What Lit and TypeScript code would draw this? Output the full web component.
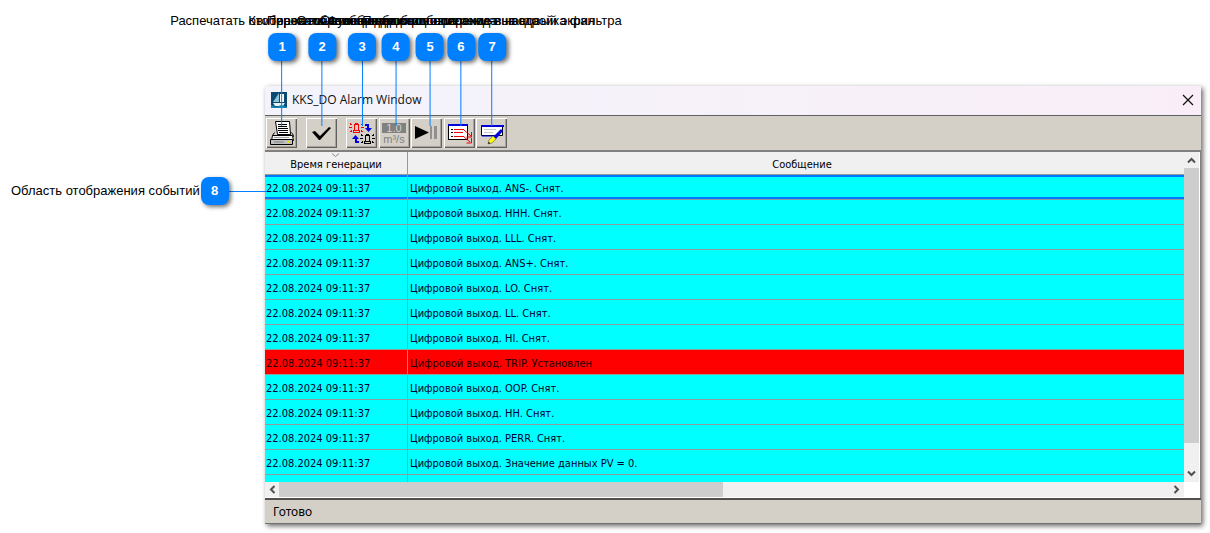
import { LitElement, html, css, svg, nothing } from "lit";
import { customElement, state } from "lit/decorators.js";
import { classMap } from "lit/directives/class-map.js";
import { styleMap } from "lit/directives/style-map.js";

interface AlarmEvent {
  time: string;
  text: string;
  active?: boolean;
}

const TIME = "22.08.2024 09:11:37";
const EVENTS: AlarmEvent[] = [
  "ANS-. Снят.",
  "HHH. Снят.",
  "LLL. Снят.",
  "ANS+. Снят.",
  "LO. Снят.",
  "LL. Снят.",
  "HI. Снят.",
  "TRIP. Установлен",
  "OOP. Снят.",
  "HH. Снят.",
  "PERR. Снят.",
  "Значение данных PV = 0.",
].map((s) => ({ time: TIME, text: `Цифровой выход. ${s}`, active: s.startsWith("TRIP") }));

const CALLOUTS = [
  { n: 1, x: 282, label: "Распечатать отображаемые события" },
  { n: 2, x: 322, label: "Квитировать сообщения" },
  { n: 3, x: 362, label: "Переключение вида просмотра" },
  { n: 4, x: 396, label: "Отображение единиц измерения" },
  { n: 5, x: 430, label: "Остановка и возобновление вывода" },
  { n: 6, x: 461, label: "Функция быстрого перехода на новый экран" },
  { n: 7, x: 492, label: "Подробное описание и настройка фильтра" },
];

const lamp = (x: number, y: number, color: string) => svg`
  <g transform="translate(${x} ${y})" fill="none" stroke=${color} shape-rendering="crispEdges">
    <path d="M2.500 7V1.500h4V7M1.500 7.500h6v2h-6zM3 .5h3"/>
    <path d="M-1.500 0v1h1v1M-3 4.500h3M-1.500 9V8h1V7M10.500 0v1h-1v1M9 4.500h3M10.500 9V8h-1V7"/>
  </g>`;

const ICONS = {
  print: svg`
    <path d="M9.500 3.500h14l1 13h-13z" fill="#fff" stroke="#000"/>
    <path d="M12 6.500h9M12 8.500h9M12 10.500h10M12 12.500h10M13 14.500h9" stroke="#000" shape-rendering="crispEdges"/>
    <path d="M8.500 14.500l-2 3v1h21v-1l-2-3" fill="none" stroke="#000"/>
    <path d="M6.500 17.500h20l1 5h-22z" fill="#f4f4f4" stroke="#000"/>
    <path d="M4.500 21.500h22v5h-22z" fill="#c0c0c0" stroke="#000"/>
    <path d="M8 19.500h15" stroke="#a0a0a0"/>
    <path d="M8 24h10" stroke="#808080"/>
    <path d="M21 24h3" stroke="#e8d800" stroke-width="2"/>`,
  ack: svg`<path d="M6 14l3-1 5 5 9-9 2 1-11 12h-1z" fill="#000"/>`,
  swap: svg`
    ${lamp(6, 5, "#f00")} ${lamp(17, 16, "#000")}
    <path d="M19 6h4v4h3l-3.500 4-3.500-4h2V8h-2z" fill="#00d"/>
    <path d="M13 25H9v-4H6l3.500-4 3.500 4h-2v2h2z" fill="#00d"/>`,
  units: svg`
    <rect x="3" y="5" width="24" height="10" fill="#808080"/>
    <text x="15" y="14" class="unit" fill="#d4d0c8">1.0</text>
    <text x="15" y="25" class="unit" fill="#808080">m³/s</text>`,
  pause: svg`
    <path d="M4 8l14 6.500L4 21z" fill="#000"/>
    <path d="M19 8h2v13h-2zM23 8h3v13h-3z" fill="#909090"/>`,
  list: svg`
    <rect x="4.500" y="6.500" width="19" height="15" fill="#fff" stroke="#000"/>
    <path d="M4 7h20" stroke="#00d" stroke-width="2"/>
    <path d="M7 11.500h2M7 14.500h2M7 18.500h2" stroke="#000"/>
    <path d="M10 11.500h10M10 14.500h9M10 18.500h9M20 12l7 6M19 18l7 6M27.500 14v5h-5M27.500 20v5h-5" fill="none" stroke="#e00"/>`,
  edit: svg`
    <path d="M5.500 7.500h21v10h-21z" fill="#fff" stroke="#000"/>
    <path d="M5 8h23" stroke="#00d" stroke-width="2"/>
    <path d="M6 18h13" stroke="#00d" stroke-width="1"/>
    <path d="M8 11.500h12M8 14.500h9" stroke="#c8c8c8"/>
    <path d="M25 11l2 2-7 8-3-2z" fill="#00d"/>
    <path d="M17 18l3 3-4 4-4 1 1-4z" fill="#ff0" stroke="#886"/>
    <path d="M12 25h2" stroke="#000"/>`,
};

const TOOL_GROUPS: { icon: keyof typeof ICONS; title: string }[][] = [
  [{ icon: "print", title: "Печать" }],
  [{ icon: "ack", title: "Квитировать" }],
  [{ icon: "swap", title: "Переключить" }],
  [{ icon: "units", title: "Единицы" }, { icon: "pause", title: "Пауза" }],
  [{ icon: "list", title: "Экран" }, { icon: "edit", title: "Фильтр" }],
];

@customElement("event-table")
export class EventTable extends LitElement {
  @state() private selected = 0;

  static styles = css`
    :host {
      display: block;
      overflow: hidden;
      background: #0ff;
      font: 11px/14px "DejaVu Sans Condensed", "Noto Sans", sans-serif;
      color: #000030;
    }
    .events {
      width: 100%;
      table-layout: fixed;
      border-collapse: separate;
      border-spacing: 0;
    }
    .time { width: 143px; }
    th, td {
      box-sizing: border-box;
      height: 25px;
      padding: 3px 2px 0;
      border-bottom: 1px solid #909c9c;
      text-align: left;
      font-weight: 400;
      white-space: nowrap;
      overflow: hidden;
    }
    th {
      position: relative;
      height: 23px;
      background: #f0f0f0;
      text-align: center;
      color: #000;
    }
    th:last-child { padding-left: 14px; }
    th:first-child, td:first-child { border-right: 1px solid #909c9c; }
    td:first-child { padding: 3px 1px 0; }
    .sort {
      position: absolute;
      top: 1px;
      left: 66px;
      fill: none;
      stroke: #888;
    }
    .active td { background: #f00; color: #200000; }
    .selected td { box-shadow: inset 0 2px #0078ff, inset 0 -2px #0078ff; }
  `;

  render() {
    return html`
      <table class="events">
        <colgroup><col class="time" /><col /></colgroup>
        <thead>
          <tr>
            <th scope="col">
              <svg class="sort" width="9" height="5"><path d="M1 .5l3.500 3L8 .5" /></svg>
              Время генерации
            </th>
            <th scope="col">Сообщение</th>
          </tr>
        </thead>
        <tbody>
          ${EVENTS.map(
            (e, i) => html`<tr
              class=${classMap({ active: !!e.active, selected: i === this.selected })}
              @click=${() => (this.selected = i)}
            >
              <td>${e.time}</td>
              <td>${e.text}</td>
            </tr>`,
          )}
          <tr><td></td><td></td></tr>
        </tbody>
      </table>
    `;
  }
}

@customElement("call-out")
export class CallOut extends LitElement {
  static properties = { number: { type: Number }, label: {}, side: { type: Boolean } };
  declare number: number;
  declare label: string;
  declare side: boolean;

  static styles = css`
    :host {
      display: flex;
      flex-direction: column;
      align-items: center;
      font: 13px/16px "Liberation Sans", Arial, sans-serif;
      color: #000;
      white-space: nowrap;
    }
    :host([side]) { flex-direction: row; }
    .label { margin-bottom: 4px; }
    :host([side]) .label { margin: 0 1px 0 0; }
    .badge {
      display: grid;
      place-items: center;
      width: 28px;
      height: 28px;
      border-radius: 8px;
      background: #0080ff;
      box-shadow: 2px 2px 4px rgba(0, 0, 0, 0.55);
      color: #fff;
      font-weight: 700;
      z-index: 1;
    }
    .line { width: 1px; height: 65px; background: #0080ff; }
    :host([side]) .line { width: 38px; height: 1px; }
  `;

  render() {
    return html`
      <span class="label">${this.label}</span>
      <span class="badge">${this.number}</span>
      <span class="line"></span>
    `;
  }
}

@customElement("app-root")
export class AppRoot extends LitElement {
  static styles = css`
    :host {
      display: flex;
      box-sizing: border-box;
      position: relative;
      height: 100vh;
      min-height: 300px;
      padding: 86px 9px 9px 265px;
      overflow: hidden;
      background: #fff;
    }
    .pin {
      position: absolute;
      top: 13px;
      transform: translateX(-50%);
    }
    .area-pin {
      position: absolute;
      top: 177px;
      left: 11px;
    }
    .window {
      flex: 1;
      min-width: 0;
      display: flex;
      flex-direction: column;
      box-sizing: border-box;
      border-bottom: 1px solid #707070;
      background: #d4d0c8;
      box-shadow: 2px 2px 5px rgba(0, 0, 0, 0.6);
    }
    .title-bar {
      display: flex;
      align-items: center;
      gap: 5px;
      box-sizing: border-box;
      height: 30px;
      padding: 0 7px 2px 6px;
      border-bottom: 1px solid #606060;
      background: linear-gradient(90deg, #f3f3fb, #f9eef7);
      font: 12px/16px "Open Sans", "Noto Sans", sans-serif;
      color: #101010;
    }
    .title { flex: 1; margin: 0; font: inherit; }
    .close {
      display: flex;
      padding: 0;
      border: 0;
      background: none;
    }
    .toolbar {
      display: flex;
      gap: 2px;
      box-sizing: border-box;
      height: 36px;
      padding: 2px 1px;
      border-bottom: 2px solid #808080;
    }
    .group { display: flex; gap: 1px; }
    .group.apart { margin-right: 7px; }
    .tool {
      display: flex;
      width: 31px;
      height: 30px;
      padding: 0;
      border: 0;
      background: #d4d0c8;
      box-shadow: inset 1px 1px #fff, inset -1px -1px #606060, inset -2px -2px #a8a49c;
    }
    .unit {
      font: 11px "Liberation Sans", Arial, sans-serif;
      text-anchor: middle;
    }
    .client {
      flex: 1;
      min-height: 0;
      display: grid;
      grid-template: minmax(0, 1fr) 15px / minmax(0, 1fr) 15px;
      padding: 0 1px 1px 0;
      border-right: 1px solid #808080;
      background: #fff;
    }
    .scroll { display: flex; background: #f0f0f0; }
    .scroll.vertical { flex-direction: column; }
    .track { flex: 1; display: flex; }
    .vertical .track { flex-direction: column; }
    .thumb { background: #cdcdcd; }
    .arrow {
      display: grid;
      place-items: center;
      width: 15px;
      height: 16px;
      padding: 0;
      border: 0;
      background: none;
    }
    .horizontal .arrow { width: 14px; height: 15px; }
    .arrow path { fill: none; stroke: #505050; stroke-width: 2; }
    .status {
      display: flex;
      align-items: center;
      height: 23px;
      padding-left: 8px;
      border-top: 2px solid #505050;
      font: 12px/16px "Noto Sans", "Open Sans", sans-serif;
    }
  `;

  private arrow(name: string, d: string) {
    return html`<button class="arrow" aria-label=${name}>
      <svg width="9" height="9"><path d=${d} /></svg>
    </button>`;
  }

  render() {
    return html`
      <main class="window">
        <header class="title-bar">
          <svg width="16" height="16" aria-hidden="true">
            <rect width="16" height="16" fill="#0b4a6e" />
            <path d="M8 1v9H2z" fill="#8fc4dc" />
            <path d="M9 2h4v8H9z" fill="#fff" />
            <path d="M2 11h12l-2 3H4z" fill="#e8f4fa" />
            <path d="M0 13l5 2 5-2 6 2v1H0z" fill="#1685b5" />
          </svg>
          <h1 class="title">KKS_DO Alarm Window</h1>
          <button class="close" aria-label="Закрыть">
            <svg width="12" height="12"><path d="M1 1l10 10M11 1L1 11" stroke="#101010" stroke-width="1.200" /></svg>
          </button>
        </header>
        <nav class="toolbar">
          ${TOOL_GROUPS.map(
            (group, i) => html`<div class=${classMap({ group: true, apart: i < 2 })}>
              ${group.map(
                (t) => html`<button class="tool" aria-label=${t.title}>
                  <svg viewBox="0 0 31 30" width="31" height="30">${ICONS[t.icon] ?? nothing}</svg>
                </button>`,
              )}
            </div>`,
          )}
        </nav>
        <section class="client">
          <event-table></event-table>
          <div class="scroll vertical">
            ${this.arrow("Вверх", "M1 6.500l3.500-3.500L8 6.500")}
            <div class="track"><div class="thumb" style=${styleMap({ height: "92.3%" })}></div></div>
            ${this.arrow("Вниз", "M1 1.500l3.500 3.500L8 1.500")}
          </div>
          <div class="scroll horizontal">
            ${this.arrow("Влево", "M6.500 1L3 4.500 6.500 8")}
            <div class="track"><div class="thumb" style=${styleMap({ width: "49.8%" })}></div></div>
            ${this.arrow("Вправо", "M1.500 1L5 4.500 1.500 8")}
          </div>
        </section>
        <footer class="status">Готово</footer>
      </main>
      ${CALLOUTS.map(
        (c) => html`<call-out class="pin" style=${styleMap({ left: `${c.x}px` })} .number=${c.n} .label=${c.label}></call-out>`,
      )}
      <call-out class="area-pin" side .number=${8} .label=${"Область отображения событий"}></call-out>
    `;
  }
}
